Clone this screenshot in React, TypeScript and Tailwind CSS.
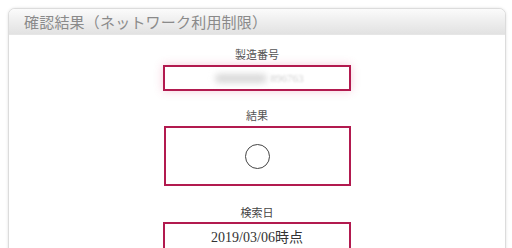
import React from "react";

export default function App() {
  return (
    <div className="w-[512px] h-[248px] bg-white overflow-hidden pt-2 pl-2 pr-[6px]">
      <div className="h-[260px] border border-[#dcdcdc] rounded-t-[7px] shadow-[0_0_3px_rgba(0,0,0,0.12)] bg-white">
        <div
          className="h-[26px] rounded-t-[6px] border-b border-[#e6e6e6] bg-gradient-to-b from-[#fbfbfb] via-[#eeeeee] to-[#e2e2e2] flex items-center pl-[15px]"
          style={{ fontFamily: '"Noto Sans CJK JP", "Noto Sans", sans-serif' }}
        >
          <span className="text-[15px] leading-none text-[#8a8a8a] tracking-[0.2px]">
            確認結果（ネットワーク利用制限）
          </span>
        </div>
        <div
          className="flex flex-col items-center pt-[13px]"
          style={{ fontFamily: '"Liberation Serif", "Noto Sans CJK JP", serif' }}
        >
          <div className="text-[11px] leading-[14px] text-[#555]">製造番号</div>
          <div className="mt-[3px] w-[188px] h-[26px] border-2 border-[#b21a4f] shadow-[0_0_10px_rgba(220,60,110,0.25)] flex items-center justify-center">
            <div className="flex items-center gap-[4px] pl-[4px]">
              <span className="w-[52px] h-[9px] bg-[#d9d9d9] blur-[3px] rounded-full" />
              <span className="text-[11px] text-[#d0d0d0] blur-[0.8px]">896763</span>
            </div>
          </div>
          <div className="mt-[18px] text-[11px] leading-[14px] text-[#555]">結果</div>
          <div className="mt-[3px] w-[187px] h-[60px] border-2 border-[#b21a4f] flex items-center justify-center">
            <div className="w-[25px] h-[25px] rounded-full border border-[#444]" />
          </div>
          <div className="mt-[20px] text-[11px] leading-[14px] text-[#444]">検索日</div>
          <div className="mt-[2px] w-[188px] h-[30px] border-2 border-[#b21a4f] flex items-start justify-center pt-[3px]">
            <span className="text-[14px] text-[#333]">2019/03/06時点</span>
          </div>
        </div>
      </div>
    </div>
  );
}
